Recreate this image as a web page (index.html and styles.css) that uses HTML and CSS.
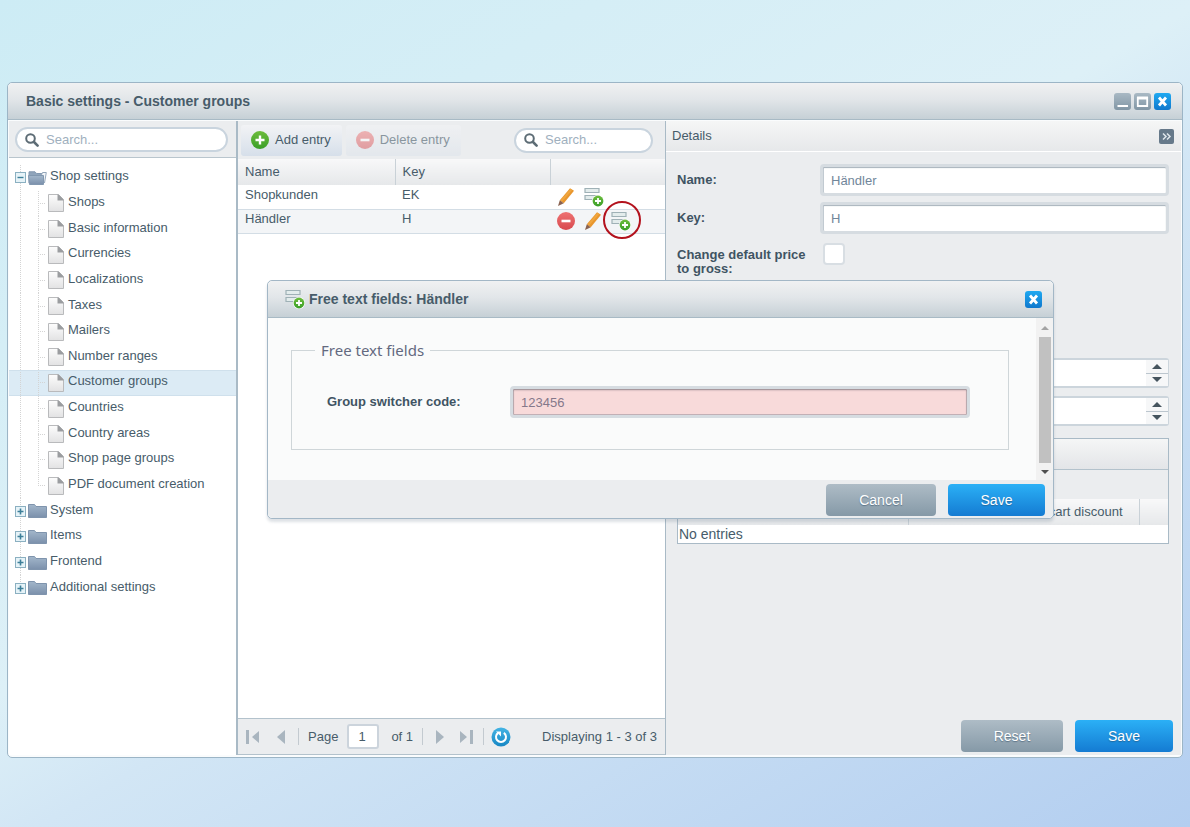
FILE: index.html
```html
<!DOCTYPE html>
<html lang="en">
<head>
<meta charset="utf-8">
<title>Basic settings - Customer groups</title>
<link rel="stylesheet" href="styles.css">
</head>
<body>
<svg class="sprite" aria-hidden="true">
  <defs>
    <linearGradient id="g-doc" x1="0" y1="0" x2="0" y2="1"><stop offset="0" stop-color="#fdfdfd"/><stop offset="1" stop-color="#e2e2e3"/></linearGradient>
    <linearGradient id="g-folder" x1="0" y1="0" x2="0" y2="1"><stop offset="0" stop-color="#a3b7cb"/><stop offset="1" stop-color="#7b90ab"/></linearGradient>
    <linearGradient id="g-green" x1="0" y1="0" x2="0" y2="1"><stop offset="0" stop-color="#6cbc3c"/><stop offset="1" stop-color="#3a9f28"/></linearGradient>
    <linearGradient id="g-red" x1="0" y1="0" x2="0" y2="1"><stop offset="0" stop-color="#ee7272"/><stop offset="1" stop-color="#d84a4f"/></linearGradient>
    <linearGradient id="g-blue" x1="0" y1="0" x2="0" y2="1"><stop offset="0" stop-color="#44b4e4"/><stop offset="1" stop-color="#1787c4"/></linearGradient>
  </defs>
  <symbol id="i-search" viewBox="0 0 14 14"><circle cx="5.500" cy="5.500" r="4.300" fill="none" stroke="#5d6c75" stroke-width="2"/><path d="M9 9L12.600 12.600" stroke="#5d6c75" stroke-width="2.600" stroke-linecap="round"/></symbol>
  <symbol id="i-doc" viewBox="0 0 16 18"><path d="M.5.5H10.500L15.500 5.500V17.500H.5Z" fill="url(#g-doc)" stroke="#b9babc"/><path d="M9.500.5H10.500L15.500 5.500V6.500H9.500Z" fill="#9b9da0"/></symbol>
  <symbol id="i-folder" viewBox="0 0 19 14"><path d="M.5 13.500V.5H6.500L8 2.500H18.500V13.500Z" fill="url(#g-folder)" stroke="#7f94ad"/></symbol>
  <symbol id="i-folder-open" viewBox="0 0 19 14"><path d="M1 12V.8H7L8.500 2.500H14.500V5" fill="#8fa4bb" stroke="#8298b0"/><path d="M13 5L14.500 1.500H18.300L16.500 12" fill="#f2f5f8" stroke="#93a6ba"/><path d="M.5 4.500H15.500V13.500H1.500Z" fill="url(#g-folder)" stroke="#8298b0"/></symbol>
  <symbol id="i-minus-box" viewBox="0 0 11 11"><rect x=".5" y=".5" width="10" height="10" fill="#e6f3f8" stroke="#8bb0c1"/><path d="M2.500 5.500H8.500" stroke="#3d7f99" stroke-width="1.400"/></symbol>
  <symbol id="i-plus-box" viewBox="0 0 11 11"><rect x=".5" y=".5" width="10" height="10" fill="#e6f3f8" stroke="#8bb0c1"/><path d="M2.500 5.500H8.500M5.500 2.500V8.500" stroke="#3d7f99" stroke-width="1.600"/></symbol>
  <symbol id="i-add" viewBox="0 0 18 18"><circle cx="9" cy="9" r="9" fill="url(#g-green)"/><path d="M4.500 9H13.500M9 4.500V13.500" stroke="#fff" stroke-width="2.400"/></symbol>
  <symbol id="i-remove" viewBox="0 0 18 18"><circle cx="9" cy="9" r="9" fill="url(#g-red)"/><path d="M4.500 9H13.500" stroke="#fff" stroke-width="2.600"/></symbol>
  <symbol id="i-pencil" viewBox="0 0 18 18"><path d="M13 .2L17 2.800L6.800 15.200L2.800 12.200Z" fill="#e8962e"/><path d="M13.600.8L15.200 2L5 13.800L3.400 12.600Z" fill="#f0a63e"/><path d="M2.800 12.200L6.800 15.200L1 18Z" fill="#8a6250"/></symbol>
  <symbol id="i-fields" viewBox="0 0 20 20"><path d="M1 1.500H15V5.500H1ZM1 8.500H15V12.500H1Z" fill="#e3ecec" stroke="#9fb1b6" stroke-width="1.200"/><circle cx="14" cy="14" r="6" fill="#fff"/><circle cx="14" cy="14" r="5.400" fill="url(#g-green)"/><path d="M11 14H17M14 11V17" stroke="#fff" stroke-width="1.800"/></symbol>
  <symbol id="i-refresh" viewBox="0 0 20 20"><circle cx="10" cy="10" r="9.500" fill="url(#g-blue)"/><path d="M7.200 5.800A5 5 0 1 0 12.800 5.800" fill="none" stroke="#fff" stroke-width="2"/><path d="M5 4.400H10V9.400Z" fill="#fff"/></symbol>
  <symbol id="i-close" viewBox="0 0 17 17"><path d="M5 4.500L12 12.500M12 4.500L5 12.500" stroke="#fff" stroke-width="2.800"/></symbol>
</svg>

<main class="window">
  <header class="titlebar">
    <h1 class="title">Basic settings - Customer groups</h1>
    <div class="tools">
      <button class="tool" type="button" aria-label="Minimize"><svg viewBox="0 0 17 17"><path d="M3.500 13H14" stroke="#fff" stroke-width="2"/></svg></button>
      <button class="tool" type="button" aria-label="Maximize"><svg viewBox="0 0 17 17"><path d="M3.800 5V13H13.200V5Z" fill="none" stroke="#fff" stroke-width="1.800"/><path d="M3 5H14" stroke="#fff" stroke-width="3"/></svg></button>
      <button class="tool tool-close" type="button" aria-label="Close"><svg><use href="#i-close"/></svg></button>
    </div>
  </header>

  <div class="panes">
    <nav class="sidebar" aria-label="Settings">
      <div class="sidebar-head">
        <label class="search"><svg><use href="#i-search"/></svg><input type="text" placeholder="Search..." aria-label="Search settings"></label>
      </div>
      <ul class="tree">
        <li class="node"><svg class="box"><use href="#i-minus-box"/></svg><svg class="folder"><use href="#i-folder-open"/></svg><a href="#">Shop settings</a></li>
        <li class="node leaf"><svg class="doc"><use href="#i-doc"/></svg><a href="#">Shops</a></li>
        <li class="node leaf"><svg class="doc"><use href="#i-doc"/></svg><a href="#">Basic information</a></li>
        <li class="node leaf"><svg class="doc"><use href="#i-doc"/></svg><a href="#">Currencies</a></li>
        <li class="node leaf"><svg class="doc"><use href="#i-doc"/></svg><a href="#">Localizations</a></li>
        <li class="node leaf"><svg class="doc"><use href="#i-doc"/></svg><a href="#">Taxes</a></li>
        <li class="node leaf"><svg class="doc"><use href="#i-doc"/></svg><a href="#">Mailers</a></li>
        <li class="node leaf"><svg class="doc"><use href="#i-doc"/></svg><a href="#">Number ranges</a></li>
        <li class="node leaf selected"><svg class="doc"><use href="#i-doc"/></svg><a href="#">Customer groups</a></li>
        <li class="node leaf"><svg class="doc"><use href="#i-doc"/></svg><a href="#">Countries</a></li>
        <li class="node leaf"><svg class="doc"><use href="#i-doc"/></svg><a href="#">Country areas</a></li>
        <li class="node leaf"><svg class="doc"><use href="#i-doc"/></svg><a href="#">Shop page groups</a></li>
        <li class="node leaf last"><svg class="doc"><use href="#i-doc"/></svg><a href="#">PDF document creation</a></li>
        <li class="node"><svg class="box"><use href="#i-plus-box"/></svg><svg class="folder"><use href="#i-folder"/></svg><a href="#">System</a></li>
        <li class="node"><svg class="box"><use href="#i-plus-box"/></svg><svg class="folder"><use href="#i-folder"/></svg><a href="#">Items</a></li>
        <li class="node"><svg class="box"><use href="#i-plus-box"/></svg><svg class="folder"><use href="#i-folder"/></svg><a href="#">Frontend</a></li>
        <li class="node end"><svg class="box"><use href="#i-plus-box"/></svg><svg class="folder"><use href="#i-folder"/></svg><a href="#">Additional settings</a></li>
      </ul>
    </nav>

    <section class="list" aria-label="Customer groups">
      <div class="toolbar">
        <button class="bar-btn" type="button"><svg><use href="#i-add"/></svg>Add entry</button>
        <button class="bar-btn off" type="button" disabled><svg><use href="#i-remove"/></svg>Delete entry</button>
        <label class="search"><svg><use href="#i-search"/></svg><input type="text" placeholder="Search..." aria-label="Search entries"></label>
      </div>
      <table class="grid">
        <colgroup><col class="c-name"><col class="c-key"><col class="c-act"></colgroup>
        <thead><tr><th>Name</th><th>Key</th><th></th></tr></thead>
        <tbody>
          <tr><td>Shopkunden</td><td>EK</td><td><div class="actions">
            <button type="button" aria-label="Edit"><svg><use href="#i-pencil"/></svg></button>
            <button type="button" aria-label="Free text fields"><svg class="fields"><use href="#i-fields"/></svg></button></div></td></tr>
          <tr class="alt"><td>Händler</td><td>H</td><td><div class="actions">
            <button type="button" aria-label="Delete"><svg><use href="#i-remove"/></svg></button>
            <button type="button" aria-label="Edit"><svg><use href="#i-pencil"/></svg></button>
            <button class="marked" type="button" aria-label="Free text fields"><svg class="fields"><use href="#i-fields"/></svg></button></div></td></tr>
        </tbody>
      </table>
      <footer class="pager">
        <button type="button" aria-label="First page"><svg class="nav" viewBox="0 0 14 14"><path d="M0 0H3V14H0ZM13 1V13L6 7Z" fill="#a9b5bf"/></svg></button>
        <button class="prev" type="button" aria-label="Previous page"><svg class="arrow" viewBox="0 0 8 14"><path d="M8 0V14L0 7Z" fill="#a9b5bf"/></svg></button>
        <span class="sep"></span>
        <label class="page">Page <input type="text" value="1"></label>
        <span class="total">of 1</span>
        <span class="sep"></span>
        <button class="next" type="button" aria-label="Next page"><svg class="arrow" viewBox="0 0 8 14"><path d="M0 0V14L8 7Z" fill="#a9b5bf"/></svg></button>
        <button class="lastp" type="button" aria-label="Last page"><svg class="nav" viewBox="0 0 14 14"><path d="M11 0H14V14H11ZM1 1V13L8 7Z" fill="#a9b5bf"/></svg></button>
        <span class="sep"></span>
        <button class="reload" type="button" aria-label="Refresh"><svg><use href="#i-refresh"/></svg></button>
        <span class="status">Displaying 1 - 3 of 3</span>
      </footer>
    </section>

    <section class="details">
      <header class="details-head"><h2>Details</h2>
        <button class="collapse" type="button" aria-label="Collapse details"><svg viewBox="0 0 15 15"><path d="M4 4.500L7 7.500L4 10.500M8 4.500L11 7.500L8 10.500" fill="none" stroke="#dfe6ec" stroke-width="1.500"/></svg></button>
      </header>
      <form class="form">
        <div class="row"><label for="name">Name:</label><input class="field" id="name" type="text" value="Händler"></div>
        <div class="row"><label for="key">Key:</label><input class="field" id="key" type="text" value="H"></div>
        <div class="row check-row"><label for="gross">Change default price to gross:</label><input class="check" id="gross" type="checkbox"></div>
        <div class="row spin-row"><span class="spin"><input type="text" aria-label="Discount"><span class="steps"><button type="button" aria-label="Increase"><svg viewBox="0 0 10 5"><path d="M0 5H10L5 0Z" fill="#45545e"/></svg></button><button type="button" aria-label="Decrease"><svg viewBox="0 0 10 5"><path d="M0 0H10L5 5Z" fill="#45545e"/></svg></button></span></span></div>
        <div class="row spin-row"><span class="spin"><input type="text" aria-label="Minimum order"><span class="steps"><button type="button" aria-label="Increase"><svg viewBox="0 0 10 5"><path d="M0 5H10L5 0Z" fill="#45545e"/></svg></button><button type="button" aria-label="Decrease"><svg viewBox="0 0 10 5"><path d="M0 0H10L5 5Z" fill="#45545e"/></svg></button></span></span></div>
        <div class="discounts">
          <div class="discounts-title"></div>
          <div class="discounts-bar"></div>
          <table class="grid">
            <colgroup><col><col><col class="c-end"></colgroup>
            <thead><tr><th>Shopping cart value</th><th>Shopping cart discount</th><th></th></tr></thead>
            <tbody><tr><td colspan="3">No entries</td></tr></tbody>
          </table>
        </div>
      </form>
      <footer class="form-actions">
        <button class="btn" type="button">Reset</button>
        <button class="btn primary" type="button">Save</button>
      </footer>
    </section>
  </div>
</main>

<div class="modal" role="dialog" aria-labelledby="modal-title">
  <header class="titlebar">
    <svg class="fields"><use href="#i-fields"/></svg>
    <h2 class="title" id="modal-title">Free text fields: Händler</h2>
    <div class="tools"><button class="tool tool-close" type="button" aria-label="Close"><svg><use href="#i-close"/></svg></button></div>
  </header>
  <div class="modal-body">
    <fieldset>
      <legend>Free text fields</legend>
      <div class="code-row"><label for="code">Group switcher code:</label><input class="field invalid" id="code" type="text" value="123456"></div>
    </fieldset>
    <div class="scroll" aria-hidden="true">
      <svg viewBox="0 0 8 4"><path d="M0 4H8L4 0Z" fill="#a3a3a3"/></svg>
      <span class="thumb"></span>
      <svg viewBox="0 0 8 4"><path d="M0 0H8L4 4Z" fill="#505050"/></svg>
    </div>
  </div>
  <footer class="modal-foot">
    <button class="btn cancel" type="button">Cancel</button>
    <button class="btn primary" type="button">Save</button>
  </footer>
</div>
</body>
</html>
```
FILE: styles.css
```css
* { box-sizing: border-box; }

body {
  margin: 0;
  min-height: 100vh;
  padding: 82px 7px 69px;
  display: flex;
  flex-direction: column;
  position: relative;
  background: linear-gradient(150deg, #cdecf5 0%, #ddf0f7 46%, #d2e6f5 56%, #b3cef0 100%);
  font: 13px/16px "Liberation Sans", Arial, sans-serif;
  color: #475c6a;
}

button, input { font: inherit; color: inherit; }
button { padding: 0; border: 0; background: none; }
a { color: inherit; text-decoration: none; }
h1, h2 { margin: 0; font-size: inherit; font-weight: normal; }
svg { display: block; flex: none; }
.sprite { position: absolute; width: 0; height: 0; }

/* Windows */
.window {
  flex: 1;
  display: flex;
  flex-direction: column;
  border: 1px solid #9cb5c6;
  border-radius: 5px;
  background: #fafcfd;
  padding: 0 1px 2px;
}
.titlebar {
  display: flex;
  align-items: center;
  height: 37px;
  margin: 0 -1px;
  padding: 0 11px 0 18px;
  border-bottom: 1px solid #a8bac5;
  border-radius: 5px 5px 0 0;
  background: linear-gradient(#f0f1f2, #e2e6e9 45%, #c6d0d6);
}
.title { flex: 1; font-size: 14px; font-weight: bold; color: #475c6a; }
.tools { display: flex; gap: 3px; }
.tool {
  width: 17px;
  height: 17px;
  border-radius: 3px;
  background: linear-gradient(#a9b9c4, #8196a5);
}
.tool svg { width: 17px; height: 17px; }
.tool-close { background: linear-gradient(#1fa9f1, #0f78cd); }

.panes {
  flex: 1;
  display: grid;
  grid-template-columns: 229px minmax(400px, 428fr) minmax(400px, 515fr);
  padding-top: 1px;
}

/* Search fields */
.search {
  display: flex;
  align-items: center;
  gap: 7px;
  height: 25px;
  padding: 0 8px;
  border: 2px solid #c9d4de;
  border-radius: 13px;
  background: #fff;
}
.search svg { width: 14px; height: 14px; }
.search input { flex: 1; min-width: 0; padding: 0; border: 0; outline: 0; background: none; }
.search input::placeholder { color: #9fb0be; opacity: 1; }

/* Sidebar */
.sidebar { border-right: 2px solid #a9bac6; background: #fff; }
.sidebar-head { padding: 6px 8px 5px 6px; border-bottom: 1px solid #b9c5cd; background: #ebedef; }
.tree {
  margin: 0;
  padding: 0;
  list-style: none;
  display: grid;
  grid-auto-rows: 1fr;
  min-height: 436px;
  margin-top: 7px;
}
.node {
  display: flex;
  align-items: center;
  padding-left: 6px;
  background: repeating-linear-gradient(#d4d4d4 0 1px, transparent 1px 2px) 11px 0 / 1px 100% no-repeat;
}
.node.end { background-size: 1px 50%; }
.node a { padding-bottom: 3px; }
.box { width: 11px; height: 11px; }
.folder { width: 19px; height: 14px; margin: 0 3px 0 2px; }
.doc { width: 16px; height: 18px; margin-right: 4px; }
.leaf {
  padding-left: 39px;
  background:
    repeating-linear-gradient(#d4d4d4 0 1px, transparent 1px 2px) 11px 0 / 1px 100% no-repeat,
    repeating-linear-gradient(#d4d4d4 0 1px, transparent 1px 2px) 29px 0 / 1px 100% no-repeat,
    repeating-linear-gradient(90deg, #d4d4d4 0 1px, transparent 1px 2px) 29px 50% / 8px 1px no-repeat;
}
.leaf.last { background-size: 1px 100%, 1px 50%, 8px 1px; }
.leaf.selected { background-color: #dcebf5; box-shadow: inset 0 1px #cfe0ec, inset 0 -1px #cfe0ec; }

/* Entry list */
.list { display: flex; flex-direction: column; border-right: 1px solid #a9bac6; background: #fff; }
.toolbar {
  display: flex;
  align-items: center;
  gap: 4px;
  height: 38px;
  padding: 0 12px 0 3px;
  background: #ebedef;
}
.toolbar .search { width: 139px; margin-left: auto; }
.bar-btn {
  display: flex;
  align-items: center;
  gap: 6px;
  height: 31px;
  padding: 0 11px 0 10px;
  border-radius: 3px;
  background: linear-gradient(#f2f3f5, #d6dfea);
}
.bar-btn svg { width: 18px; height: 18px; }
.bar-btn.off { opacity: .6; background: linear-gradient(#f2f3f5, #dfe5ec); }
.bar-btn.off svg { opacity: .8; }
.grid { width: 100%; border-collapse: collapse; table-layout: fixed; }
.grid th {
  height: 26px;
  padding: 0 7px;
  border-left: 1px solid #c9d1d7;
  background: linear-gradient(#f8f8f9, #e6e8ea);
  font-weight: normal;
  text-align: left;
}
.grid th:first-child { border-left: 0; }
.list .grid td { height: 24px; padding: 0 6px 4px 7px; border-bottom: 1px solid #d3dde5; }
.alt { background: #f3f5f7; }
.c-name { width: 157px; }
.c-key { width: 155px; }
.list .grid td:last-child { padding: 0 0 0 7px; }
.actions { display: flex; gap: 9px; height: 20px; align-items: center; }
.actions button { position: relative; }
.actions svg { width: 18px; height: 18px; }
.actions .fields, .titlebar .fields { width: 20px; height: 20px; }
.marked::after {
  content: "";
  position: absolute;
  inset: -10px -10px -8px -8px;
  border: 2px solid #b3121d;
  border-radius: 50%;
}

.pager {
  display: flex;
  align-items: center;
  height: 37px;
  margin-top: auto;
  padding: 0 8px;
  border: 1px solid #b3c2cc;
  border-width: 1px 0;
  background: #ebedef;
}
.nav { width: 14px; height: 14px; }
.arrow { width: 8px; height: 14px; }
.prev { margin: 0 13px 0 17px; }
.sep { width: 1px; height: 17px; background: #c3cad0; }
.page { display: flex; align-items: center; margin-left: 9px; }
.page input {
  width: 32px;
  height: 25px;
  margin: 0 12px 0 9px;
  padding: 0 9px;
  border: 2px solid #ccd4dc;
  border-radius: 3px;
  background: #fff;
}
.total { margin-right: 9px; }
.next { margin-left: 13px; }
.lastp { margin: 0 10px 0 15px; }
.reload { margin-left: 7px; }
.reload svg { width: 20px; height: 20px; }
.status { margin-left: auto; }

/* Details form */
.details { display: flex; flex-direction: column; background: #ebedef; min-width: 0; }
.details-head {
  display: flex;
  align-items: center;
  justify-content: space-between;
  height: 31px;
  padding: 0 7px 0 6px;
  border-bottom: 1px solid #fff;
  background: linear-gradient(#f5f6f6, #e6e8ea);
}
.collapse { width: 15px; height: 15px; border-radius: 2px; background: #66798a; }
.collapse svg { width: 15px; height: 15px; }
.form { display: flex; flex-direction: column; gap: 6px; padding: 12px 12px 0 11px; }
.row { display: grid; grid-template-columns: 143px 1fr; align-items: center; min-height: 32px; line-height: 14px; }
.row label, .code-row label { font-weight: bold; color: #3f5463; }
.field {
  width: 100%;
  height: 32px;
  padding: 0 8px;
  border: 3px solid #d6dce1;
  border-radius: 4px;
  background: #fff;
  box-shadow: inset 0 1px 1px #a7b2bb, inset 1px 0 #c5cdd4;
  color: #71869a;
  outline: 0;
}
.check-row { align-items: start; min-height: 111px; padding-top: 8px; }
.check-row label { padding-right: 10px; }
.check {
  appearance: none;
  width: 22px;
  height: 22px;
  margin: -5px 0 0 3px;
  border: 2px solid #d8dee3;
  border-radius: 4px;
  background: #fff;
}
.spin { grid-column: 2; display: flex; height: 30px; border: 2px solid #ccd5dc; border-width: 2px 1px 2px 2px; border-radius: 3px; background: #fff; }
.spin input { flex: 1; min-width: 0; border: 0; background: none; outline: 0; }
.steps { display: grid; grid-template-rows: 1fr 1fr; gap: 1px; width: 22px; background: #bcc6ce; }
.steps button { display: grid; place-items: center; background: #f6f7f8; }
.steps svg { width: 10px; height: 5px; }
.row + .discounts { margin-top: 5px; }
.discounts { border: 1px solid #a9bac6; background: #fff; }
.discounts-title { height: 31px; border-bottom: 1px solid #b3c2cc; background: linear-gradient(#f5f6f6, #e3e5e8); }
.discounts-bar { height: 29px; background: #ebedef; }
.discounts th { padding: 0 16px; text-align: right; }
.discounts td { height: 18px; padding: 0 1px; font-size: 14px; }
.c-end { width: 29px; }
.form-actions { display: flex; justify-content: flex-end; gap: 12px; margin-top: auto; padding: 0 8px 3px; }

.btn {
  height: 32px;
  width: 102px;
  border-radius: 4px;
  background: linear-gradient(#aebcc6, #8599a7);
  color: #fff;
  font-size: 14px;
  text-shadow: 0 1px 1px rgba(40, 70, 95, .5);
}
.btn.primary { width: 98px; background: linear-gradient(#2bb0f6, #147bd2); }

/* Free text fields window */
.modal {
  position: absolute;
  top: 280px;
  left: 267px;
  right: 136px;
  border: 1px solid #a3b7c6;
  border-radius: 5px;
  background: #fafbfb;
  box-shadow: 0 3px 3px rgba(90, 110, 130, .2);
}
.modal .titlebar { margin: 0; gap: 4px; padding: 0 11px 0 17px; }
.modal-body { display: flex; height: 162px; padding: 22px 0 0 23px; }
fieldset {
  flex: 1;
  min-width: 0;
  height: 110px;
  margin: 0 27px 0 0;
  padding: 26px 38px 0 35px;
  border: 1px solid #cfd6d9;
}
legend { margin-left: -12px; padding: 0 6px; font: 15px/20px "Noto Sans", sans-serif; color: #63697f; }
.code-row { display: grid; grid-template-columns: 183px 1fr; align-items: center; }
.field.invalid { background: #f8dada; box-shadow: inset 0 1px 2px #9c8d93, inset 0 0 0 1px #c4b3b8; color: #85788a; }
.scroll {
  display: flex;
  flex-direction: column;
  align-items: center;
  justify-content: space-between;
  width: 17px;
  margin-top: -22px;
  padding: 8px 0 6px;
  background: #f2f2f2;
}
.scroll svg { width: 8px; height: 4px; }
.thumb { width: 12px; height: 126px; background: #c1c1c1; }
.modal-foot {
  display: flex;
  justify-content: flex-end;
  gap: 12px;
  padding: 4px 8px 2px;
  border-radius: 0 0 5px 5px;
  background: #ebedef;
}
.cancel { width: 110px; }
.modal-foot .primary { width: 97px; }
```
